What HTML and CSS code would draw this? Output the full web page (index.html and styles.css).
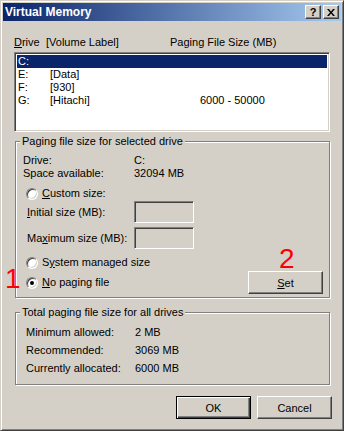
FILE: index.html
```html
<!DOCTYPE html>
<html lang="en">
<head>
    <meta charset="UTF-8">
    <title>Virtual Memory</title>
    <link rel="stylesheet" href="styles.css">
</head>
<body>
    <div class="window">
        <div class="titlebar">
            <span class="title">Virtual Memory</span>
            <span class="tbtn help">?</span>
            <span class="tbtn close">
                <svg width="8" height="7" viewBox="0 0 8 7"><path d="M0 0h2l2 2.5 2-2.5h2l-3 3.5 3 3.5h-2l-2-2.5-2 2.5h-2l3-3.5z" fill="#000"/></svg>
            </span>
        </div>
        <div class="content">
            <div class="list-head">
                <span><u>D</u>rive</span>
                <span>[Volume Label]</span>
                <span>Paging File Size (MB)</span>
            </div>
            <div class="listbox">
                <div class="row selected"><span>C:</span><span></span><span></span></div>
                <div class="row"><span>E:</span><span>[Data]</span><span></span></div>
                <div class="row"><span>F:</span><span>[930]</span><span></span></div>
                <div class="row"><span>G:</span><span>[Hitachi]</span><span>6000 - 50000</span></div>
            </div>

            <fieldset class="group drive-group">
                <legend>Paging file size for selected drive</legend>
                <div class="info">
                    <span>Drive:</span><span>C:</span>
                    <span>Space available:</span><span>32094 MB</span>
                </div>
                <div class="radio-row custom"><span class="radio"></span><span><u>C</u>ustom size:</span></div>
                <div class="size-row initial"><span class="size-label"><u>I</u>nitial size (MB):</span><span class="field"></span></div>
                <div class="size-row maximum"><span class="size-label">Ma<u>x</u>imum size (MB):</span><span class="field"></span></div>
                <div class="radio-row system"><span class="radio"></span><span>S<u>y</u>stem managed size</span></div>
                <div class="radio-row nopage">
                    <span class="radio checked"></span><span><u>N</u>o paging file</span>
                    <button class="btn set"><u>S</u>et</button>
                </div>
            </fieldset>

            <fieldset class="group total-group">
                <legend>Total paging file size for all drives</legend>
                <div class="totals">
                    <span>Minimum allowed:</span><span>2 MB</span>
                    <span>Recommended:</span><span>3069 MB</span>
                    <span>Currently allocated:</span><span>6000 MB</span>
                </div>
            </fieldset>

            <div class="buttons">
                <button class="btn default">OK</button>
                <button class="btn">Cancel</button>
            </div>
        </div>

        <div class="mark mark-1">1</div>
        <div class="mark mark-2">2</div>
    </div>
</body>
</html>
```

FILE: styles.css
```css
body {
    margin: 0;
    padding: 0;
    background: #d4d0c8;
    font-family: "Liberation Sans", Arial, sans-serif;
    font-size: 11px;
    color: #000;
}
.window {
    position: relative;
    width: 344px;
    height: 431px;
    box-sizing: border-box;
    background: #d4d0c8;
    border: 1px solid;
    border-color: #d4d0c8 #404040 #404040 #d4d0c8;
    box-shadow: inset 1px 1px 0 #fff, inset -1px -1px 0 #808080;
    padding: 2px;
}
.titlebar {
    height: 18px;
    display: flex;
    align-items: center;
    padding-left: 2px;
    background: linear-gradient(to right, #0a246a, #a6caf0);
}
.title {
    flex: 1;
    color: #fff;
    font-weight: bold;
    font-size: 12px;
}
.tbtn {
    width: 16px;
    height: 14px;
    box-sizing: border-box;
    display: flex;
    align-items: center;
    justify-content: center;
    background: #d4d0c8;
    border: 1px solid;
    border-color: #fff #404040 #404040 #fff;
    box-shadow: inset -1px -1px 0 #808080;
    font-weight: bold;
    font-size: 11px;
    line-height: 12px;
}
.help {
    margin-right: 2px;
}
.close {
    margin-right: 2px;
}
.content {
    padding: 15px 11px 0 11px;
}
.list-head {
    display: grid;
    grid-template-columns: 32px 124px auto;
    line-height: 13px;
}
.listbox {
    margin-top: 3px;
    height: 80px;
    box-sizing: border-box;
    background: #fff;
    border: 1px solid;
    border-color: #808080 #fff #fff #808080;
    box-shadow: inset 1px 1px 0 #404040, inset -1px -1px 0 #d4d0c8;
    padding: 2px 2px 0 2px;
}
.row {
    display: grid;
    grid-template-columns: 32px 150px auto;
    line-height: 13px;
    padding-left: 1px;
}
.row.selected {
    background: #0a246a;
    color: #fff;
}
.group {
    margin: 3px 0 0 1px;
    border: 1px solid #808080;
    box-shadow: inset 1px 1px 0 #fff, 1px 1px 0 #fff;
    min-inline-size: 0;
}
.group legend {
    background: #d4d0c8;
    padding: 0 2px;
    line-height: 13px;
}
.drive-group {
    padding: 6px 6px 3px 7px;
}
.drive-group legend {
    margin-left: -3px;
}
.info {
    display: grid;
    grid-template-columns: 111px auto;
    line-height: 13px;
}
.radio-row {
    display: flex;
    align-items: center;
    line-height: 13px;
    padding-left: 3px;
}
.radio {
    width: 12px;
    height: 12px;
    box-sizing: border-box;
    border-radius: 50%;
    border: 1px solid;
    border-color: #808080 #fff #fff #808080;
    box-shadow: inset 1px 1px 0 #404040, inset -1px -1px 0 #d4d0c8;
    background: #fff;
    margin-right: 4px;
    display: flex;
    align-items: center;
    justify-content: center;
}
.radio.checked::after {
    content: "";
    width: 4px;
    height: 4px;
    border-radius: 50%;
    background: #000;
}
.custom {
    margin-top: 7px;
}
.size-row {
    display: flex;
    align-items: center;
    padding-left: 4px;
    line-height: 13px;
}
.size-row.initial {
    margin-top: 1px;
}
.size-row.maximum {
    margin-top: 4px;
}
.size-label {
    width: 107px;
}
.field {
    width: 60px;
    height: 22px;
    box-sizing: border-box;
    border: 1px solid;
    border-color: #808080 #fff #fff #808080;
    box-shadow: inset 1px 1px 0 #404040, inset -1px -1px 0 #d4d0c8;
}
.system {
    margin-top: 7px;
}
.nopage {
    margin-top: 2px;
    height: 23px;
}
.btn {
    width: 75px;
    height: 23px;
    box-sizing: border-box;
    padding: 0;
    background: #d4d0c8;
    border: 1px solid;
    border-color: #fff #404040 #404040 #fff;
    box-shadow: inset -1px -1px 0 #808080;
    font-family: "Liberation Sans", Arial, sans-serif;
    font-size: 11px;
    color: #000;
}
.btn.set {
    margin-left: auto;
}
.btn.default {
    border-color: #000;
    box-shadow: inset 1px 1px 0 #fff, inset -1px -1px 0 #404040, inset -2px -2px 0 #808080;
}
.total-group {
    margin-top: 8px;
    padding: 4px 6px 7px 10px;
}
.total-group legend {
    margin-left: -6px;
}
.totals {
    display: grid;
    grid-template-columns: 109px auto;
    line-height: 18px;
}
.buttons {
    display: flex;
    justify-content: flex-end;
    gap: 6px;
    margin-top: 11px;
    margin-right: -2px;
}
.mark {
    position: absolute;
    color: #f00;
    font-size: 28px;
    line-height: 28px;
}
.mark-1 {
    left: 4px;
    top: 264px;
}
.mark-2 {
    left: 278px;
    top: 244px;
}
```
